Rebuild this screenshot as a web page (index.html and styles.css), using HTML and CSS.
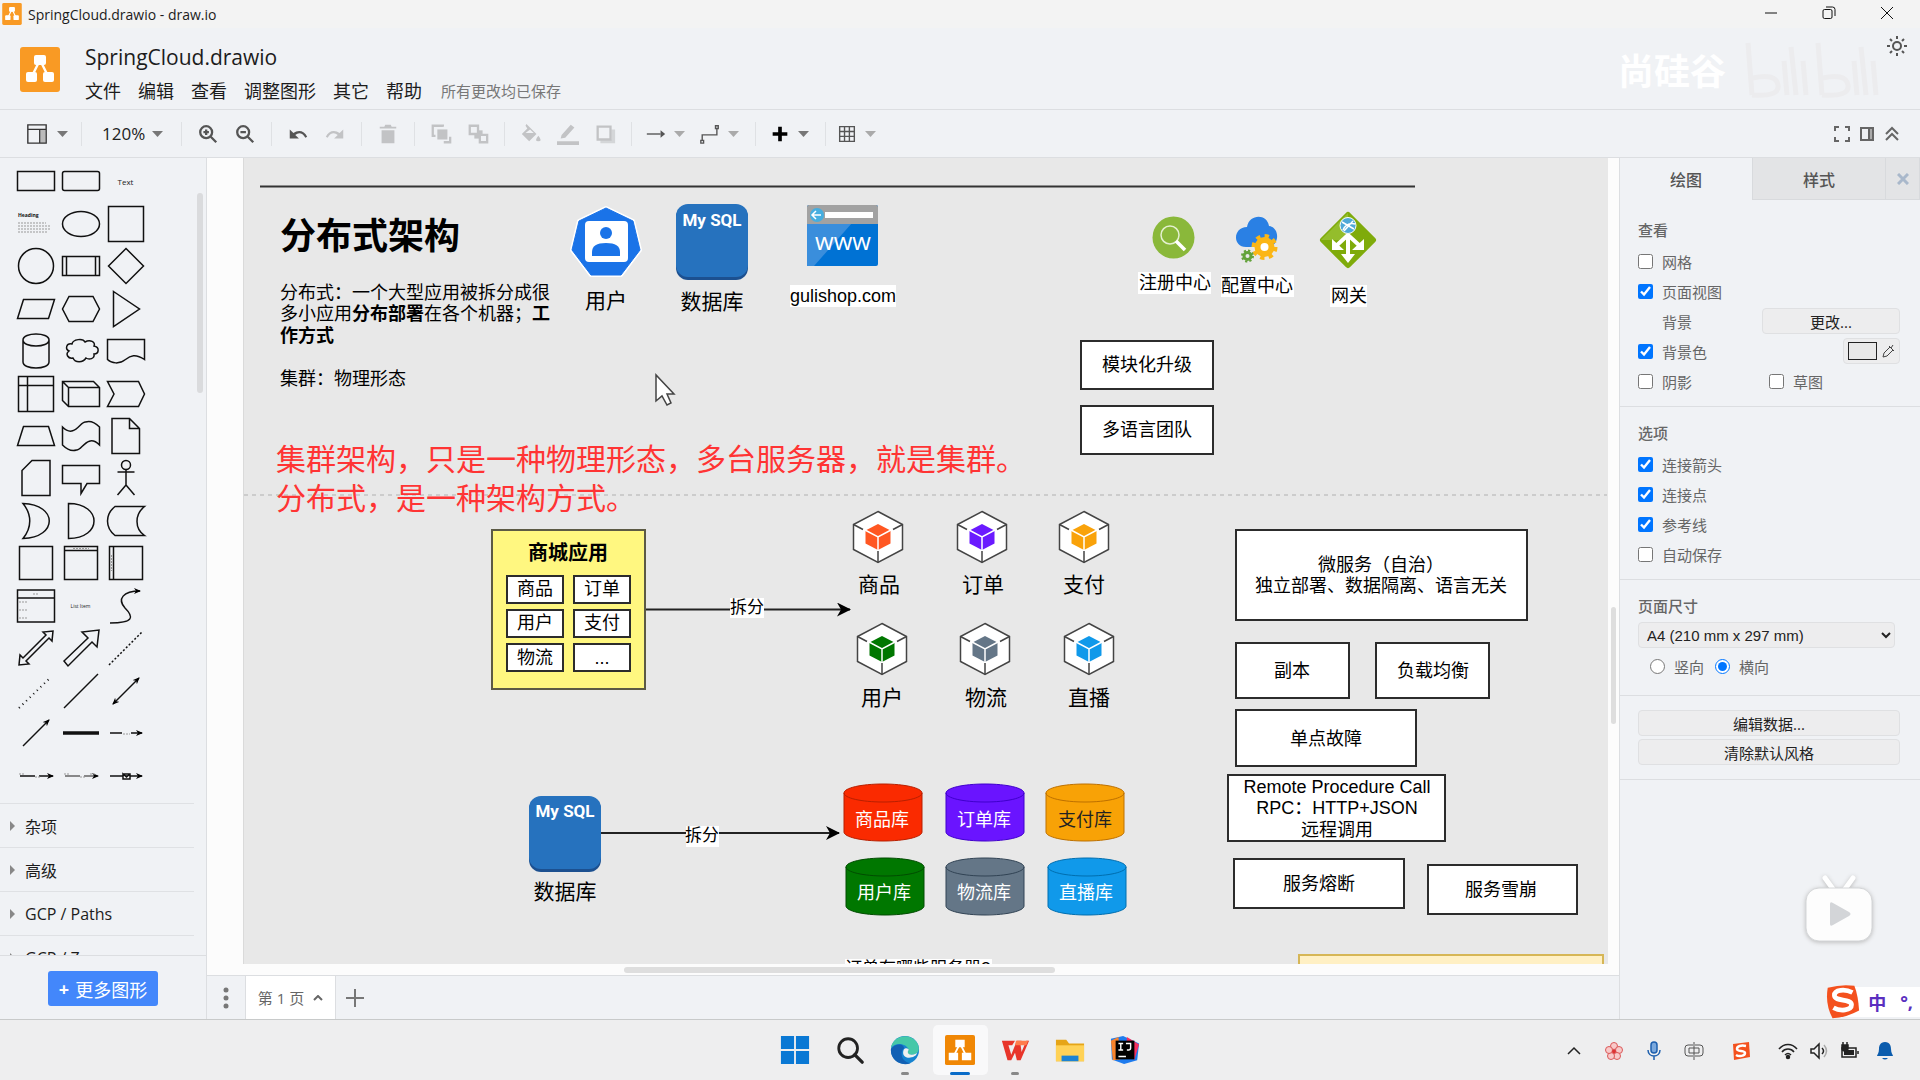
FILE: index.html
```html
<!DOCTYPE html>
<html lang="zh-CN">

<head>
  <meta charset="UTF-8" />
  <meta name="viewport" content="width=device-width, initial-scale=1.0" />
  <title>SpringCloud.drawio - draw.io</title>
  <link rel="stylesheet" href="styles.css">
</head>

<body>
  <!-- shared symbols -->
  <svg class="defs" aria-hidden="true">
    <symbol id="drawio" viewBox="0 0 40 45">
      <rect width="40" height="45" rx="3" fill="#f99a24" />
      <path d="M20 13 11 31M20 13l9 18" stroke="#fff" stroke-width="2.4" />
      <rect x="14" y="8" width="12" height="10" rx="2" fill="#fff" />
      <rect x="6" y="25" width="11" height="10" rx="2" fill="#fff" />
      <rect x="23" y="25" width="11" height="10" rx="2" fill="#fff" />
    </symbol>
    <symbol id="caret" viewBox="0 0 11 6"><path d="M0 0h11L5.500 6z" fill="currentColor" /></symbol>
    <symbol id="cube" viewBox="-27 -27 54 54">
      <path d="M0-25.500 24.500-12.500V12.500L0 25.500-24.500 12.500V-12.500z" fill="#fff" stroke="#444" stroke-width="1.500" />
      <path d="M-24.500-12.500-15-7.500M24.500-12.500 15-7.500M0 25.500V14" stroke="#444" stroke-width="1.500" />
      <path d="M0-13 12.500-6.500V6.500L0 13-12.500 6.500V-6.500z" fill="currentColor" />
      <path d="M-13-7 0 0 13-7M0 0v14" fill="none" stroke="#fff" stroke-width="1.500" />
    </symbol>
    <symbol id="db" viewBox="0 0 72 76">
      <rect y="1" width="72" height="75" rx="12" fill="#1c5090" />
      <rect width="72" height="73" rx="12" fill="#2672be" />
    </symbol>
    <symbol id="cyl" viewBox="-1 -1 80 59">
      <path d="M0 9v39c0 5 17 9 39 9s39-4 39-9V9c0-5-17-9-39-9S0 4 0 9c0 5 17 9 39 9s39-4 39-9" />
    </symbol>
    <marker id="head" markerUnits="userSpaceOnUse" markerWidth="16" markerHeight="16" refX="13" refY="7" orient="auto">
      <path d="M0 0 14 7 0 14 4 7z" />
    </marker>
    <marker id="tip" markerUnits="userSpaceOnUse" markerWidth="8" markerHeight="8" refX="6" refY="3" orient="auto-start-reverse">
      <path d="M0 0 7 3 0 6 2 3z" />
    </marker>
  </svg>

  <div class="titlebar">
    <svg class="titlebar-icon"><use href="#drawio" /></svg>
    <span class="titlebar-text">SpringCloud.drawio - draw.io</span>
    <div class="window-buttons">
      <button aria-label="最小化"><svg viewBox="0 0 14 14"><path d="M1 7h12" /></svg></button>
      <button aria-label="还原"><svg viewBox="0 0 14 14"><rect x="1" y="3.500" width="9" height="9" rx="1.500" /><path d="M4 1h6.500A2.500 2.500 0 0 1 13 3.500V10" /></svg></button>
      <button aria-label="关闭"><svg viewBox="0 0 14 14"><path d="M1 1l12 12M13 1 1 13" /></svg></button>
    </div>
  </div>

  <header class="header">
    <svg class="logo"><use href="#drawio" /></svg>
    <div class="header-main">
      <h1 class="filename">SpringCloud.drawio</h1>
      <nav class="menubar">
        <a href="#">文件</a>
        <a href="#">编辑</a>
        <a href="#">查看</a>
        <a href="#">调整图形</a>
        <a href="#">其它</a>
        <a href="#">帮助</a>
        <span class="status">所有更改均已保存</span>
      </nav>
    </div>
    <div class="brand">
      <span>尚硅谷</span>
      <svg class="brand-logo" viewBox="0 0 142 62">
        <path d="M4 4 8 56M8 56q28 2 26-10T9 39M40 22l3 34M47 8l5 48M59 22l3 34M74 4l4 52M78 56q28 2 26-10T79 39M110 22l3 34M117 8l5 48M129 22l3 34" />
      </svg>
    </div>
    <button class="theme" aria-label="外观">
      <svg viewBox="0 0 22 22"><circle cx="11" cy="11" r="4" /><path d="M11 1v3M11 18v3M1 11h3M18 11h3M4 4l2 2M16 16l2 2M4 18l2-2M16 6l2-2" /></svg>
    </button>
  </header>

  <div class="toolbar">
    <div class="group first">
      <button class="drop" aria-label="视图">
        <svg class="tool dark" viewBox="0 0 24 24"><path d="M16 7h5v15h-5z" fill="#bbb" stroke="none" /><path d="M2 2h20v20H2zM2 7h20M15 7v15" /></svg>
        <svg class="caret"><use href="#caret" /></svg>
      </button>
    </div>
    <div class="group zoom">
      <button class="drop" aria-label="缩放">120%<svg class="caret"><use href="#caret" /></svg></button>
    </div>
    <div class="group">
      <button aria-label="放大"><svg class="tool bold" viewBox="0 0 24 24"><circle cx="10" cy="10" r="6.500" /><path d="M15 15l6 6M7 10h6M10 7v6" /></svg></button>
      <button aria-label="缩小"><svg class="tool bold" viewBox="0 0 24 24"><circle cx="10" cy="10" r="6.500" /><path d="M15 15l6 6M7 10h6" /></svg></button>
    </div>
    <div class="group">
      <button aria-label="撤销"><svg class="tool fill" viewBox="0 0 24 24"><path d="M3 7v10h10l-4-4c4-3 8-2 11 3l2-1C19 8 12 7 7 11z" /></svg></button>
      <button aria-label="重做" disabled><svg class="tool fill" viewBox="0 0 24 24"><path d="M21 7v10H11l4-4c-4-3-8-2-11 3l-2-1C5 8 12 7 17 11z" /></svg></button>
    </div>
    <div class="group">
      <button aria-label="删除" disabled><svg class="tool fill" viewBox="0 0 24 24"><path d="M3 4h5l1-2h6l1 2h5v2H3zM5 8h14v14H5z" /></svg></button>
    </div>
    <div class="group">
      <button aria-label="移至前面" disabled><svg class="tool bold" viewBox="0 0 24 24"><path d="M8 7h11v11H8z" fill="currentColor" stroke="none" /><path d="M14 4V3H3v11h3M22 15v6h-7" /></svg></button>
      <button aria-label="移至后面" disabled><svg class="tool bold" viewBox="0 0 24 24"><path d="M8 8h9v9H8z" fill="currentColor" stroke="none" /><path d="M3 3h9v9H3z" fill="#f0f2f5" /><path d="M14 13h8v8h-8z" fill="#f0f2f5" /></svg></button>
    </div>
    <div class="group">
      <button aria-label="填充颜色" disabled><svg class="tool fill" viewBox="0 0 24 24"><path d="M7 1l11 11-8 8-8-8 6-6-2-3zM20 14q5 6 0 6t0-6z" /><path d="M6 11l5-4 4 4z" fill="#f0f2f5" /></svg></button>
      <button aria-label="线条颜色" disabled><svg class="tool fill" viewBox="0 0 24 24"><path d="M5 13 15 2l4 3L9 16l-5 1zM0 20h24v4H0z" /></svg></button>
      <button aria-label="阴影" disabled><svg class="tool bold" viewBox="0 0 24 24"><path d="M7 20h14V7" stroke-width="4" opacity=".6" /><path d="M4 4h14v14H4z" fill="#f0f2f5" /></svg></button>
    </div>
    <div class="group">
      <button class="drop" aria-label="连接线"><svg class="tool" viewBox="0 0 24 24"><path d="M2 12h15" /><path d="M17 8l5 4-5 4z" fill="currentColor" stroke="none" /></svg><svg class="caret light"><use href="#caret" /></svg></button>
      <button class="drop" aria-label="路径点"><svg class="tool" viewBox="0 0 24 24"><path d="M2 19h3v3H2zM3.500 19v-6h16V6M18 3h3v3h-3z" /></svg><svg class="caret light"><use href="#caret" /></svg></button>
    </div>
    <div class="group">
      <button class="drop" aria-label="插入"><svg class="tool plus" viewBox="0 0 24 24"><path d="M12 4v16M4 12h16" /></svg><svg class="caret"><use href="#caret" /></svg></button>
    </div>
    <div class="group last">
      <button class="drop" aria-label="表格"><svg class="tool" viewBox="0 0 24 24"><path d="M4 4h16v16H4zM4 9.300h16M4 14.600h16M9.300 4v16M14.600 4v16" /></svg><svg class="caret light"><use href="#caret" /></svg></button>
    </div>
    <div class="toolbar-right">
      <button aria-label="全屏"><svg viewBox="0 0 18 18"><path d="M2 6V2h4M12 2h4v4M16 12v4h-4M6 16H2v-4" /></svg></button>
      <button aria-label="格式"><svg viewBox="0 0 18 18"><path d="M11 3h4v12h-4z" fill="#aaa" /><path d="M3 3h12v12H3z" /></svg></button>
      <button aria-label="折叠"><svg viewBox="0 0 18 18"><path d="M3 9l6-6 6 6M3 15l6-6 6 6" /></svg></button>
    </div>
  </div>

  <main class="workspace">
    <aside class="sidebar">
      <div class="sidebar-scroll">
        <div class="shapes">
          <svg viewBox="0 0 42 42"><path d="M2.500 11.500h37v19h-37z" /></svg>
          <svg viewBox="0 0 42 42"><rect x="2.500" y="11.500" width="37" height="19" rx="2" /></svg>
          <span class="shape-text">Text</span>
          <svg viewBox="0 0 42 42"><text x="3" y="14" class="tiny-head">Heading</text><path d="M3 20h28M3 23h32M3 26h33M3 29h30" class="lorem" /></svg>
          <svg viewBox="0 0 42 42"><ellipse cx="21" cy="21" rx="18.500" ry="12.500" /></svg>
          <svg viewBox="0 0 42 42"><path d="M3.500 3.500h35v35h-35z" /></svg>
          <svg viewBox="0 0 42 42"><circle cx="21" cy="21" r="17.500" /></svg>
          <svg viewBox="0 0 42 42"><path d="M2.500 11.500h37v19h-37zM6.500 11.500v19M35.500 11.500v19" /></svg>
          <svg viewBox="0 0 42 42"><path d="M21 3.500 38.500 21 21 38.500 3.500 21z" /></svg>
          <svg viewBox="0 0 42 42"><path d="M8.500 11.500h31l-6 19h-31z" /></svg>
          <svg viewBox="0 0 42 42"><path d="M9 8.500h24L39.500 21 33 33.500H9L2.500 21z" /></svg>
          <svg viewBox="0 0 42 42"><path d="M8.500 3.500 34.500 21l-26 17.500z" /></svg>
          <svg viewBox="0 0 42 42"><path d="M8 10v22c0 8 26 8 26 0V10c0-8-26-8-26 0s26 8 26 0" /></svg>
          <svg viewBox="0 0 42 42"><path d="M12 14c1-5 11-6 13-2 5-3 11 0 9 4 6 1 5 8 0 8 1 5-5 6-8 4-3 5-11 5-13 0-5 1-8-4-4-7-4-2-3-8 3-7z" /></svg>
          <svg viewBox="0 0 42 42"><path d="M2.500 9.500h37v20c-9-6-14-4-19 0-6 5-14 4-18 0z" /></svg>
          <svg viewBox="0 0 42 42"><path d="M3.500 3.500h35v35h-35zM3.500 12.500h35M12.500 3.500v35" /></svg>
          <svg viewBox="0 0 42 42"><path d="M2.500 8.500h31l6 6v19h-31l-6-6zM2.500 8.500l6 6h31M8.500 14.500v19" /></svg>
          <svg viewBox="0 0 42 42"><path d="M2.500 8.500h31l6 12.500-6 12.500h-31L9 21z" /></svg>
          <svg viewBox="0 0 42 42"><path d="M8.500 11.500h25l6 19h-37z" /></svg>
          <svg viewBox="0 0 42 42"><path d="M2.500 12c12 12 18-6 23-5 6-2 10 1 14 5v18c-12-12-18 6-23 5-6 2-10-1-14-5z" /></svg>
          <svg viewBox="0 0 42 42"><path d="M7 3.500h17.500l10 10V38.500H7zM24.500 3.500v10h10" /></svg>
          <svg viewBox="0 0 42 42"><path d="M17 3.500h18v35H7V13.500z" /></svg>
          <svg viewBox="0 0 42 42"><path d="M2.500 8.500h37v18H27l-6 10v-10H2.500z" /></svg>
          <svg viewBox="0 0 42 42"><circle cx="21" cy="8" r="4.500" /><path d="M21 12.500V28M12.500 15h17M21 28l-8.500 10M21 28l8.500 10" /></svg>
          <svg viewBox="0 0 42 42"><path d="M8 3.500c35 1 35 34 0 35 9-11 9-24 0-35z" /></svg>
          <svg viewBox="0 0 42 42"><path d="M8.500 3.500c34 0 34 35 0 35z" /></svg>
          <svg viewBox="0 0 42 42"><path d="M10 6.500h29.500c-10 8-10 22 0 29H10c-10-8-10-21 0-29z" /></svg>
          <svg viewBox="0 0 42 42"><path d="M4.500 4.500h33v33h-33z" /></svg>
          <svg viewBox="0 0 42 42"><path d="M4.500 4.500h33v33h-33zM4.500 8.500h33" /><path d="M13 6.500h16" class="lorem" /></svg>
          <svg viewBox="0 0 42 42"><path d="M4.500 4.500h33v33h-33zM8.500 4.500v33" /><path d="M6.500 13v16" class="lorem" /></svg>
          <svg viewBox="0 0 42 42"><path d="M2.500 5h37v32h-37zM2.500 13h37" /><path d="M18 9h5M4 17h9M4 25h9M4 33h9" class="lorem" /></svg>
          <span class="shape-text small">List Item</span>
          <svg viewBox="0 0 42 42"><path d="M5 38c24 0 24-6 15-15-8-9-2-17 15-17" marker-end="url(#tip)" /></svg>
          <svg viewBox="0 0 42 42"><path d="M4 38l1-10 3 3L31 8l-3-3 10-1-1 10-3-3L11 34l3 3z" /></svg>
          <svg viewBox="0 0 42 42"><path d="M4 34 28 11l-6-6 17-2-2 17-5-5L8 39z" /></svg>
          <svg viewBox="0 0 42 42"><path d="M4 38 38 4" stroke-dasharray="2 2" /></svg>
          <svg viewBox="0 0 42 42"><path d="M4 38 36 7" stroke-dasharray="1 4" stroke-width="2" /></svg>
          <svg viewBox="0 0 42 42"><path d="M4 38 38 4" /></svg>
          <svg viewBox="0 0 42 42"><path d="M8 34 34 8" marker-start="url(#tip)" marker-end="url(#tip)" /></svg>
          <svg viewBox="0 0 42 42"><path d="M8 34 34 8" marker-end="url(#tip)" /></svg>
          <svg viewBox="0 0 42 42"><path d="M3 21h36" stroke-width="3.500" /></svg>
          <svg viewBox="0 0 42 42"><path d="M5 21h12M26 21h11" marker-end="url(#tip)" /><path d="M18 22h7" class="lorem" /></svg>
          <svg viewBox="0 0 42 42"><path d="M5 21h15M24 21h14" marker-end="url(#tip)" /><path d="M4 19h6M20 22h5" class="lorem" /></svg>
          <svg viewBox="0 0 42 42"><path d="M5 21h15M24 21h14" stroke="#666" marker-end="url(#tip)" /><path d="M4 19h6M20 22h5M30 19h6" class="lorem" /></svg>
          <svg viewBox="0 0 42 42"><path d="M5 21h32" marker-end="url(#tip)" /><path d="M18 19h7v5h-7l0-5 3.500 3L25 19" stroke-width="1.500" fill="#fff" /></svg>
        </div>
        <a class="section" href="#">杂项</a>
        <a class="section" href="#">高级</a>
        <a class="section" href="#">GCP / Paths</a>
        <a class="section" href="#">GCP / Zones</a>
      </div>
      <div class="sidebar-thumb"></div>
      <div class="sidebar-footer">
        <button class="more-shapes"><b>+</b>更多图形</button>
      </div>
    </aside>

    <section class="editor">
      <div class="canvas">
        <div class="page">
          <!-- diagram, scrolled so that its origin lies up and left of the view -->
          <svg class="diagram">
            <g transform="translate(-244 -158)">
              <path d="M260 186.500H1415" stroke="#333" stroke-width="2" />
              <path d="M244 495H1607" stroke="#c2c2c2" stroke-width="1.500" stroke-dasharray="4 4" />

              <text x="280" y="249" class="t36">分布式架构</text>
              <text class="t18">
                <tspan x="280" y="299">分布式：一个大型应用被拆分成很</tspan>
                <tspan x="280" y="320">多小应用<tspan class="b">分布部署</tspan>在各个机器；<tspan class="b">工</tspan></tspan>
                <tspan x="280" y="342" class="b">作方式</tspan>
                <tspan x="280" y="385">集群：物理形态</tspan>
              </text>

              <!-- user -->
              <path d="M606 208l27 13 7 29-19 25h-30l-19-25 7-29z" fill="#1a73e8" stroke="#fff" stroke-width="4" stroke-linejoin="round" />
              <path d="M606 208l27 13 7 29-19 25h-30l-19-25 7-29z" fill="#1a73e8" stroke="#1a73e8" stroke-linejoin="round" />
              <rect x="585" y="221" width="43" height="41" rx="4" fill="#fff" />
              <circle cx="606" cy="233" r="6" fill="#1a73e8" />
              <path d="M592 256v-4q0-9 14-9t14 9v4z" fill="#1a73e8" />
              <text x="606" y="308" class="t21 mid">用户</text>

              <use href="#db" x="676" y="204" width="72" height="76" />
              <text x="712" y="226" class="sql mid">My SQL</text>
              <text x="712" y="309" class="t21 mid">数据库</text>

              <!-- browser window -->
              <rect x="807" y="205" width="71" height="61" rx="2" fill="#0072d4" />
              <path d="M807 223h45l-38 43h-7z" fill="#3a8edc" />
              <path d="M807 224v-17q0-2 2-2h67q2 0 2 2v17z" fill="#a2a2a2" />
              <circle cx="817" cy="215" r="7" fill="#46aee0" />
              <path d="M821 215h-8M816 211l-4 4 4 4" fill="none" stroke="#fff" stroke-width="1.500" />
              <rect x="825" y="212" width="48" height="6" fill="#fff" />
              <text x="843" y="250" class="www mid">www</text>
              <rect x="790" y="285" width="106" height="22" class="tag" />
              <text x="843" y="302" class="t18 mid">gulishop.com</text>

              <!-- registry -->
              <circle cx="1173.500" cy="237.500" r="21" fill="#8ab83a" />
              <circle cx="1170" cy="235" r="9" fill="none" stroke="#e4f0cf" stroke-width="1.500" />
              <path d="M1176 241l9 9" stroke="#fff" stroke-width="3.500" />
              <rect x="1138" y="272" width="73" height="22" class="tag" />
              <text x="1175" y="289" class="t18 mid">注册中心</text>

              <!-- config -->
              <path d="M1246 247c-14 0-13-20 1-20 2-13 20-14 22-1 11 1 11 20-1 21z" fill="#2a80e4" />
              <circle cx="1264.500" cy="247" r="10" fill="#fbb616" />
              <circle cx="1264.500" cy="247" r="11" fill="none" stroke="#fbb616" stroke-width="4" stroke-dasharray="4.300 4.300" />
              <circle cx="1264.500" cy="247" r="4" fill="#fff" />
              <circle cx="1247.500" cy="256" r="3.500" fill="none" stroke="#63a23a" stroke-width="3" />
              <circle cx="1247.500" cy="256" r="5.500" fill="none" stroke="#63a23a" stroke-width="2" stroke-dasharray="2.200 2.100" />
              <rect x="1221" y="275" width="73" height="22" class="tag" />
              <text x="1257" y="292" class="t18 mid">配置中心</text>

              <!-- gateway -->
              <path d="M1348 215l25 25-25 25-25-25z" fill="#7fab0b" stroke="#7fab0b" stroke-width="6" stroke-linejoin="round" />
              <path d="M1348 213v27h-27z" fill="#94bd2c" />
              <path d="M1348 234v22M1348 235l-12 11M1348 235l12 11" stroke="#fff" stroke-width="4" />
              <path d="M1341 254h14l-7 9zM1332 239v11h12zM1364 239v11h-12z" fill="#fff" />
              <circle cx="1348" cy="225.500" r="8" fill="#4fa9d8" stroke="#fff" />
              <path d="M1342 222l12 7M1353 221l-9 10M1343 230q4-8 12-6" fill="none" stroke="#fff" stroke-width="1.500" />
              <rect x="1330" y="285" width="37" height="22" class="tag" />
              <text x="1349" y="302" class="t18 mid">网关</text>

              <rect x="1081" y="341" width="132" height="48" class="box" />
              <text x="1147" y="371" class="t18 mid">模块化升级</text>
              <rect x="1081" y="406" width="132" height="48" class="box" />
              <text x="1147" y="436" class="t18 mid">多语言团队</text>

              <!-- monolith -->
              <rect x="492" y="530" width="153" height="159" fill="#fff780" stroke="#5c5a45" stroke-width="2" />
              <text x="568" y="560" class="t20 b mid">商城应用</text>
              <rect x="507" y="576" width="56" height="27" class="box" />
              <rect x="574" y="576" width="56" height="27" class="box" />
              <rect x="507" y="610" width="56" height="27" class="box" />
              <rect x="574" y="610" width="56" height="27" class="box" />
              <rect x="507" y="644" width="56" height="27" class="box" />
              <rect x="574" y="644" width="56" height="27" class="box" />
              <g class="t18 mid">
                <text x="535" y="595">商品</text>
                <text x="602" y="595">订单</text>
                <text x="535" y="629">用户</text>
                <text x="602" y="629">支付</text>
                <text x="535" y="664">物流</text>
                <text x="602" y="664">...</text>
              </g>

              <path d="M646 609.500H850" class="link" marker-end="url(#head)" />
              <rect x="730" y="598" width="34" height="20" class="tag" />
              <text x="747" y="613" class="t17 mid">拆分</text>

              <!-- services -->
              <use href="#cube" x="851" y="510" width="54" height="54" color="#ff5722" />
              <use href="#cube" x="955" y="510" width="54" height="54" color="#6a1aff" />
              <use href="#cube" x="1057" y="510" width="54" height="54" color="#f9a20a" />
              <use href="#cube" x="855" y="622" width="54" height="54" color="#007700" />
              <use href="#cube" x="958" y="622" width="54" height="54" color="#647687" />
              <use href="#cube" x="1062" y="622" width="54" height="54" color="#1099ea" />
              <g class="t21 mid">
                <text x="879" y="592">商品</text>
                <text x="983" y="592">订单</text>
                <text x="1084" y="592">支付</text>
                <text x="882" y="705">用户</text>
                <text x="986" y="705">物流</text>
                <text x="1089" y="705">直播</text>
              </g>

              <!-- database split -->
              <use href="#db" x="529" y="796" width="72" height="76" />
              <text x="565" y="817" class="sql mid">My SQL</text>
              <text x="565" y="899" class="t21 mid">数据库</text>
              <path d="M601 833H839" class="link" marker-end="url(#head)" />
              <rect x="686" y="826" width="33" height="21" class="tag" />
              <text x="702" y="841" class="t17 mid">拆分</text>

              <use href="#cyl" x="843" y="783" width="80" height="59" fill="#fa2a00" stroke="#b81f00" />
              <use href="#cyl" x="945" y="783" width="80" height="59" fill="#6a14ff" stroke="#3f00cc" />
              <use href="#cyl" x="1045" y="783" width="80" height="59" fill="#f8a206" stroke="#bd7000" />
              <use href="#cyl" x="845" y="857" width="80" height="59" fill="#007700" stroke="#004c00" />
              <use href="#cyl" x="945" y="857" width="80" height="59" fill="#647687" stroke="#314354" />
              <use href="#cyl" x="1047" y="857" width="80" height="59" fill="#1099ea" stroke="#006eaf" />
              <g class="t18 mid" fill="#fff">
                <text x="882" y="826">商品库</text>
                <text x="984" y="826">订单库</text>
                <text x="1085" y="826" fill="#222">支付库</text>
                <text x="884" y="899">用户库</text>
                <text x="984" y="899">物流库</text>
                <text x="1086" y="899">直播库</text>
              </g>
              <rect x="845" y="959" width="147" height="20" class="tag" />
              <text x="845" y="974" class="t17">订单有哪些服务器?</text>

              <!-- notes -->
              <rect x="1236" y="530" width="291" height="90" class="box" />
              <rect x="1236" y="643" width="113" height="55" class="box" />
              <rect x="1376" y="643" width="113" height="55" class="box" />
              <rect x="1236" y="710" width="180" height="56" class="box" />
              <rect x="1228" y="775" width="217" height="66" class="box" />
              <rect x="1234" y="859" width="170" height="49" class="box" />
              <rect x="1428" y="865" width="149" height="49" class="box" />
              <rect x="1299" y="955" width="304" height="40" fill="#fff0c4" stroke="#d6b656" stroke-width="2" />
              <g class="t18 mid">
                <text x="1381" y="571">微服务（自治）</text>
                <text x="1381" y="592">独立部署、数据隔离、语言无关</text>
                <text x="1292" y="677">副本</text>
                <text x="1433" y="677">负载均衡</text>
                <text x="1326" y="745">单点故障</text>
                <text x="1337" y="793">Remote Procedure Call</text>
                <text x="1337" y="814">RPC：HTTP+JSON</text>
                <text x="1337" y="836">远程调用</text>
                <text x="1319" y="890">服务熔断</text>
                <text x="1501" y="896">服务雪崩</text>
              </g>

              <text class="t30">
                <tspan x="276" y="470">集群架构，只是一种物理形态，多台服务器，就是集群。</tspan>
                <tspan x="276" y="509">分布式，是一种架构方式。</tspan>
              </text>

              <path d="M656 375v26l6-5 5 9 4-2-4-9h7z" fill="#fff" stroke="#444" stroke-width="1.500" />
            </g>
          </svg>
        </div>
        <div class="thumb-v"></div>
        <div class="thumb-h"></div>
      </div>
      <div class="tabs">
        <button class="tab-menu" aria-label="页面"><svg viewBox="0 0 6 22"><circle cx="3" cy="3" r="2.500" /><circle cx="3" cy="11" r="2.500" /><circle cx="3" cy="19" r="2.500" /></svg></button>
        <button class="tab">第 1 页<svg viewBox="0 0 10 6"><path d="M1 5l4-4 4 4" /></svg></button>
        <button class="tab-add" aria-label="插入页面"><svg viewBox="0 0 18 18"><path d="M9 0v18M0 9h18" /></svg></button>
      </div>
    </section>

    <aside class="format">
      <div class="format-tabs">
        <button class="active">绘图</button>
        <button>样式</button>
        <button class="close" aria-label="关闭"><svg viewBox="0 0 12 12"><path d="M1 1l10 10M11 1 1 11" /></svg></button>
      </div>
      <section class="view">
        <h2>查看</h2>
        <div class="row"><label><input type="checkbox">网格</label></div>
        <div class="row"><label><input type="checkbox" checked>页面视图</label></div>
        <div class="row"><span class="indent">背景</span><button class="change">更改...</button></div>
        <div class="row">
          <label><input type="checkbox" checked>背景色</label>
          <button class="color" aria-label="选择颜色"><span></span><svg viewBox="0 0 14 16"><path d="M2 14l1-4 6-6 3 3-6 6zM8 3l5 5M10 5l2-3" /></svg></button>
        </div>
        <div class="row half">
          <label><input type="checkbox">阴影</label>
          <label><input type="checkbox">草图</label>
        </div>
      </section>
      <section>
        <h2>选项</h2>
        <div class="row"><label><input type="checkbox" checked>连接箭头</label></div>
        <div class="row"><label><input type="checkbox" checked>连接点</label></div>
        <div class="row"><label><input type="checkbox" checked>参考线</label></div>
        <div class="row"><label><input type="checkbox">自动保存</label></div>
      </section>
      <section>
        <h2 id="page-size">页面尺寸</h2>
        <select aria-labelledby="page-size">
          <option>A4 (210 mm x 297 mm)</option>
        </select>
        <div class="row radios">
          <label><input type="radio" name="orientation">竖向</label>
          <label><input type="radio" name="orientation" checked>横向</label>
        </div>
      </section>
      <section class="actions">
        <button>编辑数据...</button>
        <button>清除默认风格</button>
      </section>
    </aside>
  </main>

  <footer class="taskbar">
    <div class="apps">
      <button aria-label="开始"><svg viewBox="0 0 32 32"><path d="M1 1h14v14H1zM17 1h14v14H17zM1 17h14v14H1zM17 17h14v14H17z" fill="#0a78d4" /></svg></button>
      <button aria-label="搜索"><svg viewBox="0 0 32 32"><circle cx="14" cy="14" r="10" fill="none" stroke="#222" stroke-width="3" /><path d="M21 21l8 8" stroke="#222" stroke-width="3.500" stroke-linecap="round" /></svg></button>
      <button class="open" aria-label="Edge"><svg viewBox="0 0 32 32"><circle cx="16" cy="16" r="15" fill="#1683d0" /><path d="M1 14C3 1 20-3 28 7c5 7 3 14-5 14-5 0-5-3-3-5C18 9 6 7 1 14z" fill="#45c8a8" /><path d="M1 15c5-7 14-6 14-1-5 4-3 15 7 16C12 34 0 27 1 15z" fill="#1260b4" /><path d="M14 19c0-7 6-5 6-3-2 2-1 5 3 5 3 0 5-1 6-2-1 6-15 8-15 0z" fill="#f0f0f0" /></svg></button>
      <button class="active" aria-label="draw.io"><svg viewBox="0 0 32 32"><rect width="32" height="32" rx="2" fill="#f08705" /><path d="M16 9l-7 14M16 9l7 14" stroke="#fff" stroke-width="2" /><path d="M11 5h10v8H11zM4 19h10v8H4zM18 19h10v8H18z" fill="#fff" /></svg></button>
      <button class="open" aria-label="WPS"><svg viewBox="0 0 32 32"><path d="M2 6h14l-3 5h-4l3 10 6-15h5l-1 5 1 7 5-12h3L22 27h-4l-2-8-4 8H8z" fill="#e8352a" /><path d="M17 6h13l-2 5H16z" fill="#ff7d4d" /></svg></button>
      <button aria-label="文件资源管理器"><svg viewBox="0 0 32 32"><path d="M1 5h11l3 4h16v19H1z" fill="#e6a517" /><path d="M1 11h30v17H1z" fill="#ffd257" /><path d="M7 22h18v6H7z" fill="#1b83d4" /></svg></button>
      <button aria-label="IntelliJ IDEA"><svg viewBox="0 0 32 32"><path d="M1 4 14 1l17 8-2 18-14 4L2 26z" fill="#1e7bee" /><path d="M18 2l13 8-5 16-9-2z" fill="#f7305f" /><path d="M1 6l8-4 2 24-8 1z" fill="#f9842c" /><path d="M6 6h20v20H6z" /><path d="M9 9h5M11.500 9v7M9 16h5M17 9h5v5q0 2-4 2M9 23h8" fill="none" stroke="#fff" stroke-width="1.500" /></svg></button>
    </div>
    <div class="tray">
      <button aria-label="显示隐藏的图标"><svg viewBox="0 0 20 20"><path d="M4 13l6-6 6 6" /></svg></button>
      <button aria-label="同步"><svg viewBox="0 0 20 20"><g fill="#f8c9c9" stroke="#db5959" stroke-width="1"><circle cx="10" cy="5" r="3.500" /><circle cx="15" cy="9" r="3.500" /><circle cx="13" cy="15" r="3.500" /><circle cx="7" cy="15" r="3.500" /><circle cx="5" cy="9" r="3.500" /></g><circle cx="10" cy="10.500" r="2" fill="#d33" stroke="none" /></svg></button>
      <button aria-label="麦克风"><svg viewBox="0 0 20 20"><rect x="7" y="1" width="6" height="11" rx="3" fill="#7aa8dd" stroke="#1d5fae" /><path d="M4 9c0 8 12 8 12 0M10 15v4" stroke="#1d5fae" /></svg></button>
      <button aria-label="输入指示"><svg class="thin" viewBox="0 0 20 20"><path d="M9 4H4Q1 4 1 7v5q0 3 3 3h5M11 4h5q3 0 3 3v5q0 3-3 3h-5M10 1v18M5 7h10v5H5z" /></svg></button>
      <button class="sogou" aria-label="搜狗"><svg viewBox="0 0 20 20"><path d="M2 3 18 1l1 15-16 3z" fill="#f4511e" stroke="none" /><path d="M15 5c-5-1-9 0-9 3s8 1 8 4-6 4-9 2" stroke="#fff" stroke-width="2.500" /></svg></button>
      <button class="narrow" aria-label="网络"><svg viewBox="0 0 20 20"><path d="M1 8c5-6 13-6 18 0M4 11c3-4 9-4 12 0M7 14c2-2 4-2 6 0" /><circle cx="10" cy="16" r="1.500" fill="#222" /></svg></button>
      <button class="narrow" aria-label="音量"><svg viewBox="0 0 20 20"><path d="M2 8h3l5-5v14l-5-5H2zM13 7q3 3 0 6" /><path d="M15 4q5 6 0 12" stroke="#aaa" /></svg></button>
      <button class="narrow" aria-label="电池"><svg viewBox="0 0 20 20"><path d="M2 7h14v9H2zM18 10v3" /><path d="M4 9h10v5H4z" fill="#222" stroke="none" /><path d="M3 1v3M7 1v3M2 4h6v3q0 3-3 3T2 7z" fill="#222" /></svg></button>
      <button aria-label="通知"><svg viewBox="0 0 20 20"><path d="M10 1c-5 0-6 4-6 7 0 4-2 6-2 7h16c0-1-2-3-2-7 0-3-1-7-6-7zM7 17h6q-3 3-6 0z" fill="#0b5cad" stroke="none" /></svg></button>
    </div>
  </footer>

  <!-- floating widgets over the panel -->
  <svg class="player" viewBox="0 0 68 68">
    <path d="M20 3l8 11M48 3l-8 11" stroke="#fff" stroke-width="5" stroke-linecap="round" />
    <rect x="1" y="13" width="66" height="53" rx="13" fill="#fdfdfd" stroke="#d4d6d8" />
    <path d="M25 29v20q0 3 3 1l16-9q3-2 0-4l-16-9q-3-2-3 1z" fill="#d3d5d8" />
  </svg>
  <div class="ime">
    <svg viewBox="0 0 40 40"><path d="M5 5Q20 1 33 3q4 10 5 26-15 8-28 8Q2 22 5 5z" fill="#f4511e" /><path d="M31 10c-8-4-19-3-19 3 0 7 18 3 18 10 0 6-12 7-19 3" fill="none" stroke="#fff" stroke-width="5" /></svg>
    <span>中</span><span>°,</span>
  </div>
</body>

</html>
```

FILE: styles.css
```css
* {
  box-sizing: border-box;
}

html,
body {
  margin: 0;
  height: 100%;
  overflow: hidden;
}

body {
  display: flex;
  flex-direction: column;
  background: #f0f2f5;
  color: #1c1c1c;
  font-family: "Open Sans", "Noto Sans CJK SC", sans-serif;
  font-size: 15px;
}

button {
  padding: 0;
  border: 0;
  background: none;
  color: inherit;
  font: inherit;
}

a {
  color: inherit;
  text-decoration: none;
}

svg {
  flex: none;
}

.defs {
  position: absolute;
  width: 0;
  height: 0;
}

/* window title */
.titlebar {
  display: flex;
  align-items: center;
  height: 28px;
  padding: 0 4px 0 2px;
  background: #f3f3f3;
}

.titlebar-icon {
  width: 20px;
  height: 22px;
  margin-right: 6px;
}

.titlebar-text {
  font-size: 14px;
}

.window-buttons {
  display: flex;
  margin-left: auto;
}

.window-buttons button {
  width: 58px;
  height: 28px;
}

.window-buttons svg {
  width: 14px;
  height: 14px;
  fill: none;
  stroke: #111;
}

/* header */
.header {
  display: flex;
  align-items: center;
  height: 82px;
  padding: 2px 12px 0 20px;
  border-bottom: 1px solid #dcdee1;
}

.logo {
  width: 40px;
  height: 45px;
}

.header-main {
  margin-left: 25px;
  padding-top: 8px;
}

.filename {
  margin: 0;
  font-size: 21px;
  font-weight: 400;
  line-height: 34px;
}

.menubar {
  display: flex;
  align-items: center;
  gap: 17px;
  font-size: 18px;
  line-height: 34px;
}

.status {
  padding-left: 2px;
  color: #777;
  font-size: 15px;
}

.brand {
  display: flex;
  align-items: center;
  gap: 18px;
  margin-left: auto;
  color: #fff;
  font-size: 36px;
  font-weight: 700;
}

.brand-logo {
  width: 142px;
  height: 62px;
  fill: none;
  stroke: #ececee;
  stroke-width: 5;
}

.theme {
  align-self: flex-start;
}

.theme svg {
  display: block;
  width: 22px;
  height: 22px;
  margin-top: 5px;
  fill: none;
  stroke: #555;
  stroke-width: 2;
}

/* toolbar */
.toolbar {
  display: flex;
  align-items: center;
  height: 48px;
  border-bottom: 1px solid #dcdee1;
}

.group {
  display: flex;
  padding: 0 8px 0 7px;
  border-right: 1px solid #dfe1e4;
}

.group.first {
  padding: 0 7px 0 20px;
}

.group.zoom {
  padding: 0 18px 0 20px;
}

.group.last {
  padding: 0 4px;
  border: 0;
}

.group button {
  display: flex;
  align-items: center;
  justify-content: center;
  width: 37px;
  height: 24px;
  color: #555;
}

.group .drop {
  justify-content: space-between;
  width: 54px;
  padding: 0 8px 0 6px;
}

.group.first .drop {
  padding: 0 6px;
}

.group.zoom .drop {
  width: 61px;
  padding: 0;
  color: #222;
  font-size: 17px;
}

.group button:disabled {
  color: #c2c3c5;
}

.tool {
  width: 22px;
  height: 22px;
  fill: none;
  stroke: currentColor;
  stroke-width: 1.5;
}

.tool.dark {
  color: #333;
}

.tool.bold {
  stroke-width: 2.5;
}

.tool.fill {
  fill: currentColor;
  stroke: none;
}

.tool.plus {
  color: #000;
  stroke-width: 4;
}

.caret {
  width: 11px;
  height: 6px;
  color: #777;
}

.caret.light {
  color: #aaa;
}

.toolbar-right {
  display: flex;
  gap: 7px;
  margin-left: auto;
  padding-right: 19px;
}

.toolbar-right svg {
  display: block;
  width: 18px;
  height: 18px;
  fill: none;
  stroke: #666;
  stroke-width: 2;
}

/* workspace */
.workspace {
  display: flex;
  flex: 1;
  min-height: 0;
  border-bottom: 1px solid #c8caca;
}

.sidebar {
  display: flex;
  flex-direction: column;
  flex: none;
  width: 207px;
  border-right: 1px solid #dcdee1;
  position: relative;
}

.sidebar-scroll {
  flex: 1;
  min-height: 0;
  overflow: hidden;
}

.shapes {
  display: grid;
  grid-template-columns: repeat(3, 45px);
  grid-template-rows: repeat(15, 1fr);
  place-items: center;
  height: 645px;
  padding: 2px 0 6px 13px;
}

.shapes svg {
  width: 42px;
  height: 42px;
  fill: none;
  stroke: #111;
  stroke-width: 1.5;
}

.shape-text {
  font-size: 8px;
}

.shape-text.small {
  font-size: 5px;
}

.shapes .tiny-head {
  fill: #111;
  stroke: none;
  font-size: 5px;
  font-weight: 700;
}

.shapes .lorem {
  stroke: #999;
  stroke-width: 1;
  stroke-dasharray: 2 1;
}

.section {
  display: flex;
  align-items: center;
  height: 44px;
  margin-right: 12px;
  padding-left: 10px;
  border-top: 1px solid #dfe1e4;
  font-size: 16px;
}

.section::before {
  content: "";
  margin-right: 10px;
  border: 5px solid transparent;
  border-left-color: #888;
  border-right: 0;
}

.sidebar-thumb {
  position: absolute;
  top: 35px;
  right: 3px;
  width: 6px;
  height: 200px;
  border-radius: 3px;
  background: #dadbdd;
}

.sidebar-footer {
  display: flex;
  align-items: center;
  height: 64px;
  padding: 2px 0 0 48px;
  border-top: 1px solid #dcdee1;
}

.more-shapes {
  display: flex;
  align-items: center;
  justify-content: center;
  gap: 6px;
  width: 110px;
  height: 35px;
  border-radius: 3px;
  background: #4387fb;
  color: #fff;
  font-size: 18px;
}

/* editor */
.editor {
  display: flex;
  flex-direction: column;
  flex: 1;
  min-width: 0;
}

.canvas {
  position: relative;
  flex: 1;
  min-height: 0;
  padding: 0 11px 11px 36px;
  background: #fcfcfc;
}

.page {
  height: 100%;
  overflow: hidden;
  border-left: 1px solid #dadada;
  background: #e8e8e8;
}

.diagram {
  display: block;
  width: 100%;
  height: 100%;
  font-family: "Liberation Sans", "Noto Sans CJK SC", sans-serif;
}

.thumb-v,
.thumb-h {
  position: absolute;
  border-radius: 3px;
  background: #dedede;
}

.thumb-v {
  top: 55%;
  right: 3px;
  width: 5px;
  height: 117px;
}

.thumb-h {
  left: 417px;
  bottom: 2px;
  width: 431px;
  height: 6px;
}

.t17 { font-size: 17px; }
.t18 { font-size: 18px; }
.t20 { font-size: 20px; }
.t21 { font-size: 21px; }

.t30 {
  fill: #ff3434;
  font-size: 30px;
}

.t36 {
  font-size: 36px;
  font-weight: 700;
}

.b {
  font-weight: 700;
}

.mid {
  text-anchor: middle;
}

.sql {
  fill: #fff;
  font-family: Roboto, sans-serif;
  font-size: 17px;
  font-weight: 700;
}

.www {
  fill: #fff;
  font-family: "Open Sans", sans-serif;
  font-size: 24px;
}

.tag {
  fill: #fff;
}

.box {
  fill: #fff;
  stroke: #2c2c2c;
  stroke-width: 2;
}

.link {
  stroke: #222;
  stroke-width: 2;
}

/* page tabs */
.tabs {
  display: flex;
  height: 44px;
  border-top: 1px solid #dcdee1;
}

.tabs button {
  display: flex;
  align-items: center;
  justify-content: center;
}

.tabs .tab-menu {
  width: 38px;
}

.tab-menu svg {
  width: 6px;
  height: 22px;
  fill: #777;
}

.tabs .tab {
  gap: 9px;
  width: 91px;
  border: 1px solid #dcdee1;
  border-width: 0 1px;
  background: #fff;
  color: #666;
  font-size: 15px;
}

.tab svg {
  width: 10px;
  height: 6px;
  fill: none;
  stroke: #666;
  stroke-width: 2;
}

.tabs .tab-add {
  width: 38px;
}

.tab-add svg {
  width: 18px;
  height: 18px;
  stroke: #777;
  stroke-width: 2;
}

/* format panel */
.format {
  flex: none;
  width: 301px;
  border-left: 1px solid #dcdee1;
  color: #666;
}

.format-tabs {
  display: flex;
  height: 42px;
}

.format-tabs button {
  width: 133px;
  border-right: 1px solid #d8dadd;
  border-bottom: 1px solid #d8dadd;
  background: #e3e4e6;
  color: #555;
  font-size: 16px;
  font-weight: 500;
}

.format-tabs .active {
  border-bottom: 0;
  background: none;
}

.format-tabs .close {
  flex: 1;
}

.close svg {
  width: 12px;
  height: 12px;
  stroke: #a9b8cb;
  stroke-width: 3;
}

.format section {
  padding: 10px 20px 10px 18px;
  border-bottom: 1px solid #dcdee1;
}

.format .view {
  padding-top: 14px;
}

.format h2 {
  margin: 0;
  font-size: 15px;
  font-weight: 500;
  line-height: 32px;
}

.row {
  display: flex;
  align-items: center;
  justify-content: space-between;
  height: 30px;
}

.row label {
  display: flex;
  align-items: center;
  gap: 9px;
}

.row input {
  width: 15px;
  height: 15px;
  margin: 0;
  accent-color: #0075ff;
}

.row.half label {
  width: 50%;
}

.indent {
  padding-left: 24px;
}

.change,
.color,
.actions button,
.format select {
  height: 26px;
  border: 1px solid #dfe0e2;
  border-radius: 4px;
  background: #ededee;
  color: #222;
  font-size: 15px;
}

.change {
  width: 138px;
}

.color {
  display: flex;
  align-items: center;
  gap: 4px;
  padding: 0 4px;
}

.color span {
  width: 29px;
  height: 18px;
  border: 1px solid #222;
  background: #e8e8e8;
}

.color svg {
  width: 14px;
  height: 16px;
  fill: none;
  stroke: #444;
}

.format select {
  width: 257px;
  padding: 0 4px;
  font-family: "Liberation Sans", sans-serif;
}

.row.radios {
  justify-content: flex-start;
  gap: 11px;
  margin: 3px 0 4px;
  padding-left: 12px;
}

.format .actions {
  display: flex;
  flex-direction: column;
  gap: 3px;
  padding: 14px 20px 14px 18px;
}

/* taskbar */
.taskbar {
  display: grid;
  grid-template-columns: 1fr auto 1fr;
  align-items: center;
  height: 60px;
  background: #eeeeef;
}

.apps {
  display: flex;
  grid-column: 2;
}

.apps button {
  position: relative;
  width: 55px;
  height: 50px;
}

.apps svg {
  display: block;
  width: 30px;
  height: 30px;
  margin: auto;
}

.apps .active {
  border-radius: 5px;
  background: #f9f9fa;
}

.apps .open::after,
.apps .active::after {
  content: "";
  position: absolute;
  bottom: 0;
  left: 50%;
  width: 8px;
  height: 3px;
  border-radius: 2px;
  margin-left: -4px;
  background: #888;
}

.apps .active::after {
  width: 20px;
  margin-left: -10px;
  background: #0a6cc8;
}

.tray {
  display: flex;
  justify-content: flex-end;
  padding-right: 15px;
}

.tray button {
  width: 40px;
  height: 40px;
}

.tray .narrow {
  width: 31px;
}

.tray .sogou {
  margin: 0 11px 0 7px;
}

.tray svg {
  width: 20px;
  height: 20px;
  fill: none;
  stroke: #222;
  stroke-width: 1.5;
  vertical-align: middle;
}

.tray .thin {
  stroke: #555;
  stroke-width: 1;
}

/* floating widgets */
.player {
  position: absolute;
  right: 47px;
  bottom: 137px;
  width: 68px;
  height: 68px;
  filter: drop-shadow(0 1px 2px #bbb);
}

.ime {
  position: absolute;
  right: 0;
  bottom: 59px;
  display: flex;
  align-items: center;
  gap: 14px;
  height: 38px;
  padding-right: 7px;
  background: linear-gradient(#fff, #fff) right 4px / 76px 30px no-repeat;
  color: #5a2fc0;
  font-size: 18px;
  font-weight: 700;
}

.ime svg {
  width: 40px;
  height: 38px;
  margin-right: -8px;
}
```
